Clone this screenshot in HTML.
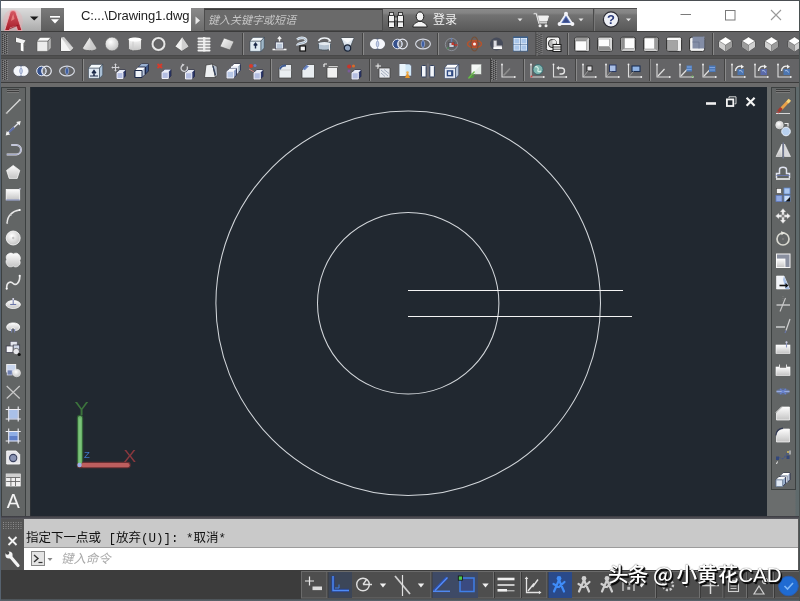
<!DOCTYPE html>
<html lang="zh-CN"><head><meta charset="utf-8"><title>Drawing1.dwg</title>
<style>
html,body{margin:0;padding:0}
body{width:800px;height:601px;overflow:hidden;position:relative;background:#5a5a5a;
 font-family:"Liberation Sans","Noto Sans CJK SC",sans-serif;}
div,svg,span{position:absolute;box-sizing:border-box}
svg{left:0;top:0;overflow:visible}
#win{left:0;top:0;width:800px;height:601px;overflow:hidden;background:#5a5a5a;will-change:transform}
#topline{left:0;top:0;width:800px;height:1px;background:#4a4e52}
#topwhite{left:1px;top:1px;width:798px;height:8px;background:#fff}
#edgeL{left:0;top:0;width:1px;height:601px;background:#56626f}
#edgeR{left:799px;top:0;width:1px;height:601px;background:#4a5252}
#titlebar{left:0;top:8px;width:800px;height:24px;background:linear-gradient(#4e4e4e 0,#4e4e4e 1px,#8a8a8a 1px,#848484 5px,#727272 7px,#585858 23px)}
#appbtn{left:1px;top:0;width:40px;height:24px;background:linear-gradient(#dcdcdc,#c4c4c4 50%,#a8a8a8)}
#qat{left:41px;top:0;width:23px;height:24px;background:linear-gradient(#7a7a7a,#5c5c5c)}
#doctab{left:64px;top:0;width:127px;height:24px;background:#fff}
#doctab span{left:17px;top:-2px;font-size:13px;line-height:20px;color:#222;white-space:nowrap;letter-spacing:-0.08px}
#srchbtn{left:191px;top:0;width:13px;height:24px;background:linear-gradient(#8a8a8a,#6a6a6a)}
#search{left:204px;top:1px;width:179px;height:22px;background:#6a6a6a;border:1px solid #4c4c4c;border-top-color:#3c3c3c}
#search span{left:3px;top:1px;font-size:11px;line-height:18px;font-style:italic;color:#c6c6c6;white-space:nowrap}
#login{left:433px;top:2px;font-size:12px;line-height:20px;color:#f0f0f0;white-space:nowrap}
#winctl{left:637px;top:0;width:162px;height:24px;background:#fff}
#tb1{left:0;top:31px;width:800px;height:25px;background:#646466;border-top:1px solid #3c3c3c;border-bottom:1px solid #484848}
#tb2{left:0;top:58px;width:800px;height:25px;background:#646466;border-top:1px solid #4a4a4a;border-bottom:1px solid #3c3c3c}
#tbgap{left:0;top:56px;width:800px;height:2px;background:#505050}
#tbgap2{left:0;top:83px;width:800px;height:5px;background:#6b6b6b}
#leftbar{left:0;top:87px;width:31px;height:431px;background:#6a6d6d;border-right:1px solid #2c3034}
#rightbar{left:767px;top:87px;width:33px;height:431px;background:linear-gradient(90deg,#6a6d6d 0,#6a6d6d 28px,#5f6a6c 29px)}
#canvas{left:31px;top:87px;width:736px;height:429px;background:#212830}
#cmdgap{left:0;top:516px;width:800px;height:3px;background:linear-gradient(#3a3a40,#5c5c62)}
#cmdgrip{left:0;top:519px;width:24px;height:51px;background:#555}
#cmdhist{left:24px;top:519px;width:774px;height:29px;background:#c9c9c9}
#cmdhist span{left:2px;top:10px;font-size:12.5px;line-height:20px;color:#111;white-space:pre;font-family:"Liberation Mono","Noto Sans CJK SC",monospace}
#cmdin{left:24px;top:547px;width:774px;height:23px;background:#fff;border-top:1px solid #9c9c9c}
#cmdin span{left:37px;top:1px;font-size:12.4px;line-height:20px;color:#aaa;font-style:italic;white-space:nowrap}
#status{left:0;top:570px;width:800px;height:31px;background:#3c3c3c}
#wm{left:609px;top:558.5px;font-size:20.6px;line-height:28px;color:#fff;white-space:nowrap;
 text-shadow:1px 1px 0 #111,1.5px 1.5px 1px #000,0 0 1px #333}
#wm .at{position:static;font-family:"Noto Sans CJK SC",sans-serif;margin-left:-3px;margin-right:3.5px}
#wm{font-weight:500}
#wm .w1{position:static;letter-spacing:-0.9px;margin-left:-1px;margin-right:2.8px}
#edgeB{left:0;top:599px;width:800px;height:2px;background:linear-gradient(#4a5054,#5c666e)}
</style></head>
<body>
<div id="win">
<div id="topline"></div><div id="topwhite"></div>
<div id="titlebar">
<div id="appbtn"></div><div id="qat"></div>
<div id="doctab"><span>C:...\Drawing1.dwg</span></div>
<div id="srchbtn"></div>
<div id="search"><span>键入关键字或短语</span></div>
<span id="login">登录</span>
<div id="winctl"></div>
<svg width="800" height="24" viewBox="0 8 800 24"><defs>
<linearGradient id="gw" x1="0" y1="0" x2="1" y2="1"><stop offset="0" stop-color="#fff"/><stop offset="1" stop-color="#b8b8b8"/></linearGradient>
<linearGradient id="gv" x1="0" y1="0" x2="0" y2="1"><stop offset="0" stop-color="#fdfdfd"/><stop offset="1" stop-color="#c4c4c4"/></linearGradient>
<linearGradient id="gb" x1="0" y1="0" x2="1" y2="1"><stop offset="0" stop-color="#e8f0fa"/><stop offset="1" stop-color="#6f8fc0"/></linearGradient>
<radialGradient id="gs" cx="0.4" cy="0.35" r="0.7"><stop offset="0" stop-color="#fff"/><stop offset="1" stop-color="#c0c0c0"/></radialGradient>
<linearGradient id="ga" x1="0" y1="0" x2="0" y2="1"><stop offset="0" stop-color="#d85a64"/><stop offset="1" stop-color="#a41c28"/></linearGradient>
</defs><ellipse cx="13" cy="21" rx="10" ry="11.5" fill="#f4a8b0" opacity="0.3"/><path d="M4.6 30.6 L10.4 11.4 Q13 9.6 15.6 11.4 L22 30.6 H17.6 L16.2 26.2 L10 28 L9.2 30.6Z" fill="url(#ga)" stroke="#eeb0b6" stroke-width="0.9"/><path d="M12 17 L13.2 14 L14.6 19 L11 21Z" fill="#f08a88" opacity="0.8"/><path d="M9 29 L18.5 25" stroke="#8a1420" stroke-width="1.2" opacity="0.7"/><path d="M30 16.5 H38.5 L34.2 20.5Z" fill="#1a1a1a"/><rect x="50" y="16" width="10" height="1.6" fill="#fff"/><path d="M51 19.2 H59 L55 23.5Z" fill="#fff"/><path d="M195.5 16.5 L200 20.5 L195.5 24.5Z" fill="#e8e8e8"/><g><rect x="388.5" y="15" width="6" height="12.5" rx="1" fill="#f2f2f2" stroke="#222" stroke-width="1"/><rect x="397.5" y="15" width="6" height="12.5" rx="1" fill="#f2f2f2" stroke="#222" stroke-width="1"/><rect x="389.5" y="12.5" width="4" height="3" fill="#ddd" stroke="#222" stroke-width="0.8"/><rect x="398.5" y="12.5" width="4" height="3" fill="#ddd" stroke="#222" stroke-width="0.8"/><rect x="394.5" y="17" width="3" height="4" fill="#999" stroke="#222" stroke-width="0.6"/><rect x="389" y="21" width="5" height="1.5" fill="#666"/><rect x="398" y="21" width="5" height="1.5" fill="#666"/></g><g><ellipse cx="420" cy="16.5" rx="3.8" ry="4.6" fill="#f4f4f4" stroke="#1c1c1c" stroke-width="1"/><path d="M412.8 27 C413.5 23 417 22.8 418.2 21.5 H421.8 C423 22.8 426.5 23 427.2 27Z" fill="#f4f4f4" stroke="#1c1c1c" stroke-width="0.9"/></g><path d="M517.5 18.5 H522.5 L520 21.2Z" fill="#e4e4e4"/><g fill="none" stroke="#f0f0f0" stroke-width="1.6"><path d="M533.5 13.5 H536.5 L539 23 H547"/><path d="M537.5 16 H548.5 L547 21 H538.8Z" fill="#f0f0f0" stroke-width="1"/></g><circle cx="540" cy="25.8" r="1.5" fill="#f0f0f0"/><circle cx="546" cy="25.8" r="1.5" fill="#f0f0f0"/><path d="M533 13 H537 L539.5 23.5 H547.5" fill="none" stroke="#222" stroke-width="0.5" opacity="0.6"/><path d="M566 14 L572.5 24 H559.5Z" fill="#5a74b8" stroke="#eef0f8" stroke-width="1.8" stroke-linejoin="round"/><circle cx="566" cy="13.8" r="2" fill="#f4f4f8"/><circle cx="559.6" cy="24" r="2" fill="#f4f4f8"/><circle cx="572.4" cy="24" r="2" fill="#f4f4f8"/><path d="M566 17.5 L569.3 22.5 H562.7Z" fill="#3a4a88"/><path d="M578.5 18.5 H583.5 L581 21.2Z" fill="#e4e4e4"/><rect x="593" y="9" width="1" height="22" fill="#4a4a4a"/><rect x="594" y="9" width="1" height="22" fill="#787878"/><circle cx="611" cy="19.5" r="7.6" fill="#eef0f6" stroke="#2c2c34" stroke-width="1.2"/><text x="611" y="24.3" text-anchor="middle" font-family="Liberation Sans,sans-serif" font-weight="bold" font-size="13" fill="#2a3a7a">?</text><path d="M626 18.5 H631 L628.5 21.2Z" fill="#e4e4e4"/><rect x="680.5" y="14" width="10.5" height="1" fill="#7a7a7a"/><rect x="725.5" y="10.5" width="9.5" height="9.5" fill="none" stroke="#7a7a7a" stroke-width="1"/><path d="M771 10 L781 20 M781 10 L771 20" stroke="#999" stroke-width="1.1" fill="none"/></svg>
</div>
<div id="tb1"></div><div id="tbgap"></div><div id="tb2"></div><div id="tbgap2"></div>
<svg width="800" height="60" viewBox="0 0 800 60" style="top:30px"><path d="M2.5 4 V24" stroke="#3a3a3a" stroke-width="1" stroke-dasharray="1 1"/><path d="M3.5 5 V24" stroke="#858585" stroke-width="1" stroke-dasharray="1 1"/><path d="M4.5 5 V24" stroke="#3a3a3a" stroke-width="1" stroke-dasharray="1 1"/><path d="M5.5 4 V24" stroke="#858585" stroke-width="1" stroke-dasharray="1 1"/><path d="M6.5 4 V24" stroke="#3a3a3a" stroke-width="1" stroke-dasharray="1 1"/><path d="M7.5 5 V24" stroke="#858585" stroke-width="1" stroke-dasharray="1 1"/><path d="M2.5 30 V50" stroke="#3a3a3a" stroke-width="1" stroke-dasharray="1 1"/><path d="M3.5 31 V50" stroke="#858585" stroke-width="1" stroke-dasharray="1 1"/><path d="M4.5 31 V50" stroke="#3a3a3a" stroke-width="1" stroke-dasharray="1 1"/><path d="M5.5 30 V50" stroke="#858585" stroke-width="1" stroke-dasharray="1 1"/><path d="M6.5 30 V50" stroke="#3a3a3a" stroke-width="1" stroke-dasharray="1 1"/><path d="M7.5 31 V50" stroke="#858585" stroke-width="1" stroke-dasharray="1 1"/><rect x="242" y="3" width="1" height="22" fill="#444"/><rect x="243" y="3" width="1" height="22" fill="#8a8a8a"/><rect x="362" y="3" width="1" height="22" fill="#444"/><rect x="363" y="3" width="1" height="22" fill="#8a8a8a"/><rect x="437" y="3" width="1" height="22" fill="#444"/><rect x="438" y="3" width="1" height="22" fill="#8a8a8a"/><rect x="567" y="3" width="1" height="22" fill="#444"/><rect x="568" y="3" width="1" height="22" fill="#8a8a8a"/><rect x="712" y="3" width="1" height="22" fill="#444"/><rect x="713" y="3" width="1" height="22" fill="#8a8a8a"/><rect x="82" y="29" width="1" height="22" fill="#444"/><rect x="83" y="29" width="1" height="22" fill="#8a8a8a"/><rect x="270" y="29" width="1" height="22" fill="#444"/><rect x="271" y="29" width="1" height="22" fill="#8a8a8a"/><rect x="369" y="29" width="1" height="22" fill="#444"/><rect x="370" y="29" width="1" height="22" fill="#8a8a8a"/><rect x="523" y="29" width="1" height="22" fill="#444"/><rect x="524" y="29" width="1" height="22" fill="#8a8a8a"/><rect x="575" y="29" width="1" height="22" fill="#444"/><rect x="576" y="29" width="1" height="22" fill="#8a8a8a"/><rect x="649" y="29" width="1" height="22" fill="#444"/><rect x="650" y="29" width="1" height="22" fill="#8a8a8a"/><rect x="724" y="29" width="1" height="22" fill="#444"/><rect x="725" y="29" width="1" height="22" fill="#8a8a8a"/><rect x="535.5" y="2" width="1" height="24" fill="#3e3e3e"/><rect x="536.5" y="2" width="1" height="24" fill="#747474"/><path d="M537.0 4 V24" stroke="#3a3a3a" stroke-width="1" stroke-dasharray="1 1"/><path d="M538.0 5 V24" stroke="#858585" stroke-width="1" stroke-dasharray="1 1"/><path d="M539.0 5 V24" stroke="#3a3a3a" stroke-width="1" stroke-dasharray="1 1"/><path d="M540.0 4 V24" stroke="#858585" stroke-width="1" stroke-dasharray="1 1"/><path d="M541.0 4 V24" stroke="#3a3a3a" stroke-width="1" stroke-dasharray="1 1"/><path d="M542.0 5 V24" stroke="#858585" stroke-width="1" stroke-dasharray="1 1"/><rect x="490" y="28" width="1" height="24" fill="#3e3e3e"/><rect x="491" y="28" width="1" height="24" fill="#747474"/><path d="M491.5 30 V50" stroke="#3a3a3a" stroke-width="1" stroke-dasharray="1 1"/><path d="M492.5 31 V50" stroke="#858585" stroke-width="1" stroke-dasharray="1 1"/><path d="M493.5 31 V50" stroke="#3a3a3a" stroke-width="1" stroke-dasharray="1 1"/><path d="M494.5 30 V50" stroke="#858585" stroke-width="1" stroke-dasharray="1 1"/><path d="M495.5 30 V50" stroke="#3a3a3a" stroke-width="1" stroke-dasharray="1 1"/><path d="M496.5 31 V50" stroke="#858585" stroke-width="1" stroke-dasharray="1 1"/><g transform="translate(13.0 6.0)"><path d="M3 1.5 L12.5 4.5 V10.5 L10.5 10 V15.5 L7.5 14.5 V7 L3 6Z" fill="#dedede" stroke="#3a3a3a" stroke-width="0.6"/><path d="M7.8 7 L10.5 7.6 V15.5 L7.8 14.5Z" fill="#fff"/><path d="M3 1.5 L12.5 4.5 L10.5 7.6 L3 6Z" fill="#f4f4f4"/><path d="M10.5 7.6 L12.5 4.5 V10.5 L10.5 10Z" fill="#6a6a6a"/></g><g transform="translate(36.0 6.0)"><path d="M1 5 H12 V15.4 H1Z" fill="#ececec" stroke="#4a4a4a" stroke-width="0.5"/><path d="M1 5 L4 1.4 H15.2 L12 5Z" fill="#fbfbfb" stroke="#4a4a4a" stroke-width="0.5"/><path d="M12 5 L15.2 1.4 V12 L12 15.4Z" fill="#b4b4b4" stroke="#4a4a4a" stroke-width="0.5"/></g><g transform="translate(59.0 6.0)"><path d="M2 1.5 L14.5 12 L11.5 15 H2Z" fill="url(#gw)" stroke="#3a3a3a" stroke-width="0.7"/><path d="M2 1.5 L5 1 L14.5 12 L11.5 15Z" fill="#d6d6d6" opacity="0.9"/><path d="M2 1.5 V15 H11.5 L2 1.5Z" fill="#f4f4f4"/></g><g transform="translate(81.5 6.0)"><path d="M8 1 L15 12 C15 15.5 1 15.5 1 12Z" fill="url(#gw)" stroke="#444" stroke-width="0.6"/><path d="M8 1 L9.5 14.5 C12 14.3 15 13.5 15 12Z" fill="#c9c9c9" opacity="0.7"/></g><g transform="translate(104.0 6.0)"><circle cx="8" cy="8" r="6.9" fill="url(#gs)" stroke="#555" stroke-width="0.6"/></g><g transform="translate(127.0 6.0)"><path d="M1.5 3.5 C1.5 0.8 14.5 0.8 14.5 3.5 V12.5 C14.5 15.4 1.5 15.4 1.5 12.5Z" fill="url(#gv)" stroke="#444" stroke-width="0.6"/><path d="M6 1.7 V14.5" stroke="#ccc" stroke-width="1"/><ellipse cx="8" cy="3.5" rx="6.5" ry="2" fill="#fff"/></g><g transform="translate(150.5 6.0)"><circle cx="8" cy="8" r="6" fill="none" stroke="#e6e6e6" stroke-width="2.6"/><circle cx="8" cy="8" r="7.4" fill="none" stroke="#444" stroke-width="0.5"/><circle cx="8" cy="8" r="4.6" fill="none" stroke="#444" stroke-width="0.5"/></g><g transform="translate(173.5 6.0)"><path d="M8.5 1 L15 10.5 L8 15 L1.5 10.5Z" fill="#f0f0f0" stroke="#444" stroke-width="0.6"/><path d="M8.5 1 L15 10.5 L8 15Z" fill="#cfcfcf"/></g><g transform="translate(196.0 6.0)"><rect x="7" y="1" width="2.4" height="14.5" fill="#dcdcdc"/><rect x="1.5" y="1.6" width="13" height="1.8" rx="0.9" fill="#f2f2f2"/><rect x="1.5" y="4.6" width="13" height="1.8" rx="0.9" fill="#f2f2f2"/><rect x="1.5" y="7.6" width="13" height="1.8" rx="0.9" fill="#f2f2f2"/><rect x="1.5" y="10.6" width="13" height="1.8" rx="0.9" fill="#f2f2f2"/><rect x="1.5" y="13.6" width="13" height="1.8" rx="0.9" fill="#f2f2f2"/></g><g transform="translate(219.0 6.0)"><path d="M5 2 L15 5.5 L11 14 L1 10.5Z" fill="url(#gw)" stroke="#555" stroke-width="0.6"/></g><g transform="translate(249.0 6.0)"><path d="M1 5 H12 V15.4 H1Z" fill="#dfeaf2" stroke="#2b3a4a" stroke-width="0.5"/><path d="M1 5 L4 1.4 H15.2 L12 5Z" fill="#f4f8fb" stroke="#2b3a4a" stroke-width="0.5"/><path d="M12 5 L15.2 1.4 V12 L12 15.4Z" fill="#9fb6c8" stroke="#2b3a4a" stroke-width="0.5"/><path d="M6.5 12.5 V8 M4.8 9.5 L6.5 7.2 L8.2 9.5" stroke="#1c2a4a" stroke-width="1.4" fill="none"/></g><g transform="translate(271.5 6.0)"><path d="M1 13.5 H15" stroke="#f4f4f4" stroke-width="1.6"/><rect x="4" y="6" width="8" height="7" fill="#dfe6ee" stroke="#445" stroke-width="0.7"/><path d="M8 5.5 V1.5 M6.3 3 L8 1 L9.7 3" stroke="#f0f0f0" stroke-width="1.3" fill="none"/><rect x="5.5" y="8" width="5" height="4" fill="#b9c6d8"/></g><g transform="translate(294.0 6.0)"><path d="M3 3.5 C7 0.5 13 2 12 5 C11 8 3 6.5 3.5 9.5" fill="none" stroke="#e8eef4" stroke-width="2.6"/><path d="M3 3.5 C7 0.5 13 2 12 5 C11 8 3 6.5 3.5 9.5" fill="none" stroke="#8aa0b8" stroke-width="0.8"/><rect x="6" y="10" width="5.5" height="5" fill="#f4f4f4" stroke="#111" stroke-width="1.2"/></g><g transform="translate(316.5 6.0)"><path d="M2 5 C4 1 12 1 14 5" fill="none" stroke="#eef2f6" stroke-width="1.6"/><path d="M12.5 3.2 L14.6 5.6 L11.6 5.8Z" fill="#eef2f6"/><path d="M2 7.5 C2 5.8 14 5.8 14 7.5 V12.5 C14 14.6 2 14.6 2 12.5Z" fill="#b4c2d0" stroke="#3a4650" stroke-width="0.7"/><ellipse cx="8" cy="7.6" rx="6" ry="1.7" fill="#e4eaf0"/><path d="M13 8 V14.5" stroke="#e8e8e8" stroke-width="1"/></g><g transform="translate(339.5 6.0)"><path d="M1.5 2 H14.5 L10.5 12 H5.5Z" fill="#dfe6ee" stroke="#3a4650" stroke-width="0.7"/><path d="M1.5 2 H14.5 L8 7Z" fill="#f7f9fb"/><circle cx="8" cy="12" r="3.2" fill="#8fa3bf" stroke="#1a2436" stroke-width="1.2"/></g><g transform="translate(369.5 6.0)"><ellipse cx="8" cy="8" rx="7.6" ry="5.6" fill="#3b5590" opacity="0.55"/><circle cx="5.5" cy="8" r="4.6" fill="#f4f6fb" stroke="#fff" stroke-width="0.8"/><circle cx="10.5" cy="8" r="4.6" fill="#f4f6fb" stroke="#fff" stroke-width="0.8"/><path d="M8 4.5 C6.2 6.5 6.2 9.5 8 11.5 C9.8 9.5 9.8 6.5 8 4.5Z" fill="#c9d3ea" stroke="#6a7db0" stroke-width="0.6"/></g><g transform="translate(392.0 6.0)"><circle cx="5.5" cy="8" r="4.8" fill="#35508c" stroke="#e6e9f2" stroke-width="1"/><circle cx="10.5" cy="8" r="4.8" fill="none" stroke="#e6e9f2" stroke-width="1.2"/><path d="M8 4 C6 6.3 6 9.7 8 12 C10 9.7 10 6.3 8 4Z" fill="#6a6a6a" stroke="#e6e9f2" stroke-width="0.7"/></g><g transform="translate(415.0 6.0)"><ellipse cx="8" cy="8" rx="7.4" ry="4.9" fill="none" stroke="#d8dce6" stroke-width="1.1"/><path d="M8 4 C5.8 6.3 5.8 9.7 8 12 C10.2 9.7 10.2 6.3 8 4Z" fill="#3e5fa4" stroke="#9fb0d8" stroke-width="0.7"/></g><g transform="translate(443.5 6.0)"><circle cx="8" cy="8.5" r="6.2" fill="none" stroke="#8a8f98" stroke-width="1"/><path d="M8 9 V2" stroke="#6a7fb0" stroke-width="1.4"/><path d="M8 9 H14" stroke="#c0392b" stroke-width="1.6"/><path d="M8 9 L3.5 13" stroke="#4f8a5a" stroke-width="1.4"/><rect x="5.5" y="6.5" width="5" height="5" fill="#c9cdd6" stroke="#334" stroke-width="0.6"/><rect x="8" y="6.5" width="2.5" height="2.5" fill="#c0392b"/></g><g transform="translate(466.5 6.0)"><ellipse cx="8" cy="8" rx="7" ry="3.6" fill="none" stroke="#b5532c" stroke-width="1.5"/><ellipse cx="8" cy="8" rx="3.6" ry="7" fill="none" stroke="#7a4a2a" stroke-width="1.1" opacity="0.8"/><circle cx="8" cy="8" r="3" fill="#c0452b"/><circle cx="8" cy="8" r="1.5" fill="#fbeee6"/></g><g transform="translate(489.0 6.0)"><circle cx="7.5" cy="8" r="6.5" fill="#2a3350" opacity="0.5"/><path d="M4.5 4.5 H7.8 V9.5 H13 V13 H4.5Z" fill="#dcdce4" stroke="#777" stroke-width="0.4"/><path d="M4.5 11.2 H13 V13 H4.5Z" fill="#fff"/></g><g transform="translate(512.5 6.0)"><rect x="0.5" y="0.5" width="15" height="15" fill="#2f5f9a" opacity="0.75"/><rect x="1.5" y="2.5" width="5.6" height="5.2" fill="#a9c6ea" stroke="#e8f2ff" stroke-width="0.8"/><rect x="8.5" y="2.5" width="5.6" height="5.2" fill="#a9c6ea" stroke="#e8f2ff" stroke-width="0.8"/><rect x="1.5" y="9" width="5.6" height="5.2" fill="#a9c6ea" stroke="#e8f2ff" stroke-width="0.8"/><rect x="8.5" y="9" width="5.6" height="5.2" fill="#a9c6ea" stroke="#e8f2ff" stroke-width="0.8"/></g><g transform="translate(545.5 6.0)"><rect x="0.8" y="1" width="13.5" height="13.5" rx="2" fill="#f2f2f2" stroke="#2a2a2a" stroke-width="1"/><circle cx="7" cy="7.5" r="4" fill="#b8b8b8" stroke="#333" stroke-width="1.1"/><path d="M7 3.5 A4 4 0 0 1 11 7.5 H7Z" fill="#e8e8e8"/><rect x="7.5" y="8.5" width="8" height="7" fill="#fafafa" stroke="#1a1a1a" stroke-width="1"/><path d="M7.5 11 H15.5 M7.5 13.2 H15.5" stroke="#1a1a1a" stroke-width="0.8"/></g><g transform="translate(574.0 6.0)"><rect x="0.6" y="1.2" width="15" height="14.2" rx="2.2" fill="#e4e4e4" stroke="#2e2e2e" stroke-width="1"/><path d="M1.2 1.8 H15 L12.5 5 H1.5 Z" fill="#9a9a9a"/><path d="M15 1.8 V14.8 L12.5 14.5 V5 Z" fill="#cfcfcf"/><rect x="1.5" y="5" width="11.0" height="9.5" fill="#fdfdfd" stroke="#777" stroke-width="0.5"/></g><g transform="translate(597.0 6.0)"><rect x="0.6" y="1.2" width="15" height="14.2" rx="2.2" fill="#e4e4e4" stroke="#2e2e2e" stroke-width="1"/><path d="M1.2 1.8 H15 L12.5 3 H1.5 Z" fill="#f4f4f4"/><path d="M1.2 14.8 H15 L12.5 10.5 H1.5 Z" fill="#8e8e8e"/><path d="M15 1.8 V14.8 L12.5 10.5 V3 Z" fill="#d8d8d8"/><rect x="1.5" y="3" width="11.0" height="7.5" fill="#fdfdfd" stroke="#777" stroke-width="0.5"/></g><g transform="translate(620.0 6.0)"><rect x="0.6" y="1.2" width="15" height="14.2" rx="2.2" fill="#e4e4e4" stroke="#2e2e2e" stroke-width="1"/><path d="M1.2 14.8 H15 L14.5 12.5 H4.5 Z" fill="#c8c8c8"/><path d="M1.2 1.8 V14.8 L4.5 12.5 V2 Z" fill="#8e8e8e"/><rect x="4.5" y="2" width="10.0" height="10.5" fill="#fdfdfd" stroke="#777" stroke-width="0.5"/></g><g transform="translate(643.0 6.0)"><rect x="0.6" y="1.2" width="15" height="14.2" rx="2.2" fill="#e4e4e4" stroke="#2e2e2e" stroke-width="1"/><path d="M1.2 14.8 H15 L11.5 13 H1.5 Z" fill="#cfcfcf"/><path d="M15 1.8 V14.8 L11.5 13 V2 Z" fill="#9a9a9a"/><rect x="1.5" y="2" width="10.0" height="11" fill="#fdfdfd" stroke="#777" stroke-width="0.5"/></g><g transform="translate(666.0 6.0)"><rect x="0.6" y="1.2" width="15" height="14.2" rx="2.2" fill="#e4e4e4" stroke="#2e2e2e" stroke-width="1"/><path d="M1.2 1.8 H15 L11.5 4.5 H1.5 Z" fill="#fafafa"/><path d="M15 1.8 V14.8 L11.5 14.5 V4.5 Z" fill="#f0f0f0"/><rect x="1.5" y="4.5" width="10.0" height="10.0" fill="#a4a4a4" stroke="#777" stroke-width="0.5"/></g><g transform="translate(689.0 6.0)"><rect x="0.6" y="1.2" width="15" height="14.2" rx="2" fill="#f2f2f2" stroke="#2e2e2e" stroke-width="1"/><rect x="3.5" y="0.5" width="12" height="12" fill="#838da6"/><path d="M3.5 6 H10 V12.5" fill="none" stroke="#6a7490" stroke-width="0.8"/></g><g transform="translate(717.5 6.0)"><path d="M8 1 L14.5 5 V11 L8 15.5 L1.5 11 V5Z" fill="#f4f4f4" stroke="#3a3a3a" stroke-width="0.7"/><path d="M8 1 L14.5 5 L8 9 L1.5 5Z" fill="#fff"/><path d="M1.5 5 L8 9 V15.5 L1.5 11Z" fill="#cfcfcf"/><path d="M8 9 L14.5 5 V11 L8 15.5Z" fill="#9c9c9c"/><path d="M8 1 L14.5 5 L8 9 L1.5 5Z M8 9 V15.5" fill="none" stroke="#555" stroke-width="0.5"/></g><g transform="translate(740.5 6.0)"><path d="M8 1 L14.5 5 V11 L8 15.5 L1.5 11 V5Z" fill="#f4f4f4" stroke="#3a3a3a" stroke-width="0.7"/><path d="M8 1 L14.5 5 L8 9 L1.5 5Z" fill="#fff"/><path d="M1.5 5 L8 9 V15.5 L1.5 11Z" fill="#9c9c9c"/><path d="M8 9 L14.5 5 V11 L8 15.5Z" fill="#cfcfcf"/><path d="M8 1 L14.5 5 L8 9 L1.5 5Z M8 9 V15.5" fill="none" stroke="#555" stroke-width="0.5"/></g><g transform="translate(763.5 6.0)"><path d="M8 1 L14.5 5 V11 L8 15.5 L1.5 11 V5Z" fill="#f4f4f4" stroke="#3a3a3a" stroke-width="0.7"/><path d="M8 1 L14.5 5 L8 9 L1.5 5Z" fill="#fff"/><path d="M1.5 5 L8 9 V15.5 L1.5 11Z" fill="#cfcfcf"/><path d="M8 9 L14.5 5 V11 L8 15.5Z" fill="#9c9c9c"/><path d="M8 1 L14.5 5 L8 9 L1.5 5Z M8 9 V15.5" fill="none" stroke="#555" stroke-width="0.5"/></g><g transform="translate(786.5 6.0)"><path d="M8 1 L14.5 5 V11 L8 15.5 L1.5 11 V5Z" fill="#f4f4f4" stroke="#3a3a3a" stroke-width="0.7"/><path d="M8 1 L14.5 5 L8 9 L1.5 5Z" fill="#fff"/><path d="M1.5 5 L8 9 V15.5 L1.5 11Z" fill="#9c9c9c"/><path d="M8 9 L14.5 5 V11 L8 15.5Z" fill="#cfcfcf"/><path d="M8 1 L14.5 5 L8 9 L1.5 5Z M8 9 V15.5" fill="none" stroke="#555" stroke-width="0.5"/></g><g transform="translate(13.0 33.0)"><ellipse cx="8" cy="8" rx="7.6" ry="5.6" fill="#3b5590" opacity="0.55"/><circle cx="5.5" cy="8" r="4.6" fill="#f4f6fb" stroke="#fff" stroke-width="0.8"/><circle cx="10.5" cy="8" r="4.6" fill="#f4f6fb" stroke="#fff" stroke-width="0.8"/><path d="M8 4.5 C6.2 6.5 6.2 9.5 8 11.5 C9.8 9.5 9.8 6.5 8 4.5Z" fill="#c9d3ea" stroke="#6a7db0" stroke-width="0.6"/></g><g transform="translate(36.0 33.0)"><circle cx="5.5" cy="8" r="4.8" fill="#35508c" stroke="#e6e9f2" stroke-width="1"/><circle cx="10.5" cy="8" r="4.8" fill="none" stroke="#e6e9f2" stroke-width="1.2"/><path d="M8 4 C6 6.3 6 9.7 8 12 C10 9.7 10 6.3 8 4Z" fill="#6a6a6a" stroke="#e6e9f2" stroke-width="0.7"/></g><g transform="translate(59.0 33.0)"><ellipse cx="8" cy="8" rx="7.4" ry="4.9" fill="none" stroke="#d8dce6" stroke-width="1.1"/><path d="M8 4 C5.8 6.3 5.8 9.7 8 12 C10.2 9.7 10.2 6.3 8 4Z" fill="#3e5fa4" stroke="#9fb0d8" stroke-width="0.7"/></g><g transform="translate(87.5 33.0)"><path d="M1 5 H12 V15.4 H1Z" fill="#dfe8f2" stroke="#2b3a4a" stroke-width="0.5"/><path d="M1 5 L4 1.4 H15.2 L12 5Z" fill="#f6fafd" stroke="#2b3a4a" stroke-width="0.5"/><path d="M12 5 L15.2 1.4 V12 L12 15.4Z" fill="#a9bfd6" stroke="#2b3a4a" stroke-width="0.5"/><path d="M6.5 13 V8.5 M4.6 10.2 L6.5 7.6 L8.4 10.2" stroke="#1c2a4a" stroke-width="1.5" fill="none"/><path d="M2.5 13 H10.5" stroke="#1c2a4a" stroke-width="1"/></g><g transform="translate(110.5 33.0)"><path d="M5 1 V8 M1.5 4.5 H8.5" stroke="#d4d4d8" stroke-width="1.1"/><path d="M5 0.3 L6.3 2 H3.7Z M5 8.7 L6.3 7 H3.7Z M0.8 4.5 L2.5 3.2 V5.8Z M9.2 4.5 L7.5 3.2 V5.8Z" fill="#d4d4d8"/><path d="M6.5 9.55 L9.05 7 H15.0 V12.95 L12.45 15.5 H6.5Z" fill="#2e3a6e" stroke="#1e2444" stroke-width="0.8"/><path d="M6.5 9.55 L9.05 7 H15.0 L12.45 9.55Z" fill="#e8ecf8"/><path d="M6.5 9.55 H12.45 V15.5 H6.5Z" fill="#b4bee2" stroke="#f2f2f8" stroke-width="1"/></g><g transform="translate(133.5 33.0)"><path d="M5 4.0 L8.0 1 H15 V8.0 L12.0 11 H5Z" fill="#3f5888" stroke="#1e2444" stroke-width="0.8"/><path d="M5 4.0 L8.0 1 H15 L12.0 4.0Z" fill="#9ab0d0"/><path d="M5 4.0 H12.0 V11 H5Z" fill="#5f7aa8" stroke="#1c2a4a" stroke-width="1"/><path d="M1.5 7.5 L4.5 4.5 H11.5 V11.5 L8.5 14.5 H1.5Z" fill="#b8c6dc" stroke="#1e2444" stroke-width="0.8"/><path d="M1.5 7.5 L4.5 4.5 H11.5 L8.5 7.5Z" fill="#fff"/><path d="M1.5 7.5 H8.5 V14.5 H1.5Z" fill="#eef2f8" stroke="#1c2a4a" stroke-width="1"/></g><g transform="translate(156.5 33.0)"><path d="M1 1 L5.5 5 M5.5 1 L1 5" stroke="#d83a2a" stroke-width="1.8"/><path d="M5.5 9.2 L8.2 6.5 H14.5 V12.8 L11.8 15.5 H5.5Z" fill="#2e3a6e" stroke="#1e2444" stroke-width="0.8"/><path d="M5.5 9.2 L8.2 6.5 H14.5 L11.8 9.2Z" fill="#e8ecf8"/><path d="M5.5 9.2 H11.8 V15.5 H5.5Z" fill="#b4bee2" stroke="#f2f2f8" stroke-width="1"/></g><g transform="translate(179.5 33.0)"><path d="M7.5 3.5 A3.2 3.2 0 1 1 3.5 2.2" fill="none" stroke="#d0d0d4" stroke-width="1.3"/><path d="M2.2 0.6 L5.2 1.6 L3 3.8Z" fill="#d0d0d4"/><path d="M6 9.7 L8.7 7 H15 V13.3 L12.3 16 H6Z" fill="#2e3a6e" stroke="#1e2444" stroke-width="0.8"/><path d="M6 9.7 L8.7 7 H15 L12.3 9.7Z" fill="#e8ecf8"/><path d="M6 9.7 H12.3 V16 H6Z" fill="#b4bee2" stroke="#f2f2f8" stroke-width="1"/></g><g transform="translate(202.5 33.0)"><path d="M3.5 2 L10 1 L13 14.5 H2Z" fill="#eef0f2" stroke="#3a3a3a" stroke-width="0.7"/><path d="M10 1 L14.5 3.5 L15 12 L13 14.5Z" fill="#b4bcc8" stroke="#3a3a3a" stroke-width="0.6"/><path d="M10.5 3 L13 12" stroke="#33415e" stroke-width="1.2"/></g><g transform="translate(225.5 33.0)"><path d="M6 3.6999999999999997 L8.7 1 H15 V7.300000000000001 L12.3 10 H6Z" fill="#9ab" stroke="#1e2444" stroke-width="0.8"/><path d="M6 3.6999999999999997 L8.7 1 H15 L12.3 3.6999999999999997Z" fill="#fff"/><path d="M6 3.6999999999999997 H12.3 V10 H6Z" fill="#dfe6f2" stroke="#f2f2f8" stroke-width="1"/><path d="M1.5 8.35 L4.35 5.5 H11.0 V12.15 L8.15 15.0 H1.5Z" fill="#8496c0" stroke="#1e2444" stroke-width="0.8"/><path d="M1.5 8.35 L4.35 5.5 H11.0 L8.15 8.35Z" fill="#f6f8fc"/><path d="M1.5 8.35 H8.15 V15.0 H1.5Z" fill="#b8c8e6" stroke="#f2f2f8" stroke-width="1"/></g><g transform="translate(248.0 33.0)"><circle cx="3" cy="3" r="2" fill="#d83a2a"/><circle cx="7" cy="2.5" r="1.5" fill="#6a7fc0"/><path d="M1 6 L6 9" stroke="#c88" stroke-width="1"/><path d="M6 9.7 L8.7 7 H15 V13.3 L12.3 16 H6Z" fill="#2e3a6e" stroke="#1e2444" stroke-width="0.8"/><path d="M6 9.7 L8.7 7 H15 L12.3 9.7Z" fill="#e8ecf8"/><path d="M6 9.7 H12.3 V16 H6Z" fill="#b4bee2" stroke="#f2f2f8" stroke-width="1"/></g><g transform="translate(277.0 33.0)"><path d="M2 6 C2 3 5 1.5 8 1.5 H14.5 V15 H2Z" fill="#e9edf1" stroke="#3a3a3a" stroke-width="0.7"/><path d="M3 6.5 C3.5 3.5 6 2.5 9 2.5" stroke="#3e5a92" stroke-width="1.8" fill="none"/><path d="M2 7 H14.5" stroke="#bbb" stroke-width="0.6"/></g><g transform="translate(300.0 33.0)"><path d="M2 7 L7 1.5 H14.5 V15 H2Z" fill="#e9edf1" stroke="#3a3a3a" stroke-width="0.7"/><path d="M3.5 6.5 L7.5 2.5" stroke="#5f7ab8" stroke-width="2.2" fill="none"/><path d="M5 7 L9 3" stroke="#9ab0e0" stroke-width="1"/></g><g transform="translate(323.0 33.0)"><path d="M1 1 H4 M1 1 V4" stroke="#eee" stroke-width="1.2"/><path d="M4 4.5 H14.5 V15 H4Z" fill="#f1f1f1" stroke="#3a3a3a" stroke-width="0.7"/><path d="M4 4.5 L6 3 H15.5 L14.5 4.5Z" fill="#fff" stroke="#444" stroke-width="0.5"/></g><g transform="translate(346.0 33.0)"><circle cx="3.2" cy="3.5" r="2.1" fill="#c8342a"/><circle cx="7.5" cy="3" r="1.6" fill="#d86a2a"/><circle cx="3" cy="8" r="1.5" fill="#7a5a9a"/><path d="M6 9.7 L8.7 7 H15 V13.3 L12.3 16 H6Z" fill="#2e3a6e" stroke="#1e2444" stroke-width="0.8"/><path d="M6 9.7 L8.7 7 H15 L12.3 9.7Z" fill="#e8ecf8"/><path d="M6 9.7 H12.3 V16 H6Z" fill="#b4bee2" stroke="#f2f2f8" stroke-width="1"/></g><g transform="translate(375.0 33.0)"><path d="M3 0.5 V6 M0.5 3 H6" stroke="#f4f4f4" stroke-width="1"/><path d="M4 5 H15 V15 H4Z" fill="#e6e9ee" stroke="#3a3a3a" stroke-width="0.7"/><path d="M6 7 L13 13 M6 10 L10 13.5 M9 6.5 L14 10.5" stroke="#9aa4b8" stroke-width="0.9"/></g><g transform="translate(397.5 33.0)"><path d="M2 1 H12 L14 3 V13 H2Z" fill="#cfe6f6" stroke="#556" stroke-width="0.6"/><path d="M2 1 H8 V13 H2Z" fill="#e9f4fb"/><path d="M10 9 L12.5 15 H7.5Z" fill="#e8962a"/><circle cx="10" cy="9.5" r="1.3" fill="#f0b050"/></g><g transform="translate(420.0 33.0)"><rect x="1.5" y="2.5" width="4.6" height="11.5" rx="0.8" fill="#f3f6fb" stroke="#33415e" stroke-width="1"/><rect x="9.8" y="2.5" width="4.6" height="11.5" rx="0.8" fill="#f3f6fb" stroke="#33415e" stroke-width="1"/><path d="M8 0.5 V15.5" stroke="#889" stroke-width="0.8"/></g><g transform="translate(443.5 33.0)"><path d="M1 5 H12 V15.4 H1Z" fill="#e9eef6" stroke="#24365e" stroke-width="0.5"/><path d="M1 5 L4 1.4 H15.2 L12 5Z" fill="#fff" stroke="#24365e" stroke-width="0.5"/><path d="M12 5 L15.2 1.4 V12 L12 15.4Z" fill="#b4c2d6" stroke="#24365e" stroke-width="0.5"/><rect x="3.2" y="7.2" width="6.6" height="6.2" fill="#2f4a82"/><rect x="4.6" y="8.6" width="3" height="3.4" fill="#dfe6f2"/></g><g transform="translate(466.5 33.0)"><path d="M5 1.5 H15 V11.5 H5Z" fill="#e4ebe6" stroke="#666" stroke-width="0.6"/><path d="M5 1.5 H15 L5 11.5Z" fill="#f4f7f5"/><path d="M1 15 L6 9.5 L4 14 L9 10.5 L6.5 15Z" fill="#4c9a3c"/><path d="M2 15.5 L8 8.5" stroke="#6cba4c" stroke-width="1.2"/></g><g transform="translate(500.0 33.0)"><path d="M2 1.5 V14 H15" fill="none" stroke="#dcdcdc" stroke-width="1.1"/><circle cx="2" cy="1.5" r="0.9" fill="#eee"/><circle cx="14.8" cy="14" r="0.9" fill="#eee"/><path d="M3.5 12.5 L10 5.5" stroke="#8c8c8c" stroke-width="1.6"/></g><g transform="translate(529.0 33.0)"><path d="M2 1.5 V14 H15" fill="none" stroke="#dcdcdc" stroke-width="1.1"/><circle cx="2" cy="1.5" r="0.9" fill="#eee"/><circle cx="14.8" cy="14" r="0.9" fill="#eee"/><circle cx="9" cy="6.5" r="5" fill="#7fb6b0" stroke="#2f5f6a" stroke-width="0.8"/><path d="M6 4 C8 3 10 5 9 7 C8 9 11 9 12 8" fill="none" stroke="#d6f0e6" stroke-width="1.2"/><circle cx="2.5" cy="13.5" r="1" fill="#c44"/></g><g transform="translate(551.5 33.0)"><path d="M2 1.5 V14 H15" fill="none" stroke="#dcdcdc" stroke-width="1.1"/><circle cx="2" cy="1.5" r="0.9" fill="#eee"/><circle cx="14.8" cy="14" r="0.9" fill="#eee"/><path d="M6.5 5 H10 A3 3 0 0 1 10 11 H8" fill="none" stroke="#e6e6e6" stroke-width="1.4"/><path d="M4.8 5 L7.5 3 V7Z" fill="#e6e6e6"/></g><g transform="translate(581.0 33.0)"><path d="M2 1.5 V14 H15" fill="none" stroke="#dcdcdc" stroke-width="1.1"/><circle cx="2" cy="1.5" r="0.9" fill="#eee"/><circle cx="14.8" cy="14" r="0.9" fill="#eee"/><rect x="6" y="3" width="5" height="5" fill="#e6e6ea" stroke="#222" stroke-width="0.9"/><path d="M3 13 L7 8" stroke="#999" stroke-width="1"/></g><g transform="translate(604.0 33.0)"><path d="M2 1.5 V14 H15" fill="none" stroke="#dcdcdc" stroke-width="1.1"/><circle cx="2" cy="1.5" r="0.9" fill="#eee"/><circle cx="14.8" cy="14" r="0.9" fill="#eee"/><rect x="5.5" y="2" width="6.5" height="6.5" fill="#a9bfe6" stroke="#2a3a66" stroke-width="1"/><path d="M3 13 L7 8.5" stroke="#999" stroke-width="1"/></g><g transform="translate(626.5 33.0)"><path d="M2 1.5 V14 H15" fill="none" stroke="#dcdcdc" stroke-width="1.1"/><circle cx="2" cy="1.5" r="0.9" fill="#eee"/><circle cx="14.8" cy="14" r="0.9" fill="#eee"/><rect x="5.5" y="3" width="8" height="5.5" fill="#8fb2e2" stroke="#1c3054" stroke-width="1.1"/><path d="M3 13 L7 8.5" stroke="#999" stroke-width="1"/></g><g transform="translate(655.0 33.0)"><path d="M2 1.5 V14 H15" fill="none" stroke="#dcdcdc" stroke-width="1.1"/><circle cx="2" cy="1.5" r="0.9" fill="#eee"/><circle cx="14.8" cy="14" r="0.9" fill="#eee"/><path d="M3 13 L9.5 6" stroke="#e0e0e0" stroke-width="1.2"/></g><g transform="translate(678.0 33.0)"><path d="M2 1.5 V14 H15" fill="none" stroke="#dcdcdc" stroke-width="1.1"/><circle cx="2" cy="1.5" r="0.9" fill="#eee"/><circle cx="14.8" cy="14" r="0.9" fill="#eee"/><path d="M3 13 L9.5 6" stroke="#e0e0e0" stroke-width="1.2"/><rect x="8.5" y="2.5" width="5.5" height="6" fill="#4f7fc0"/><path d="M9 4 H13.5 M9 6.5 H13.5" stroke="#88a8de" stroke-width="0.9"/><circle cx="14.5" cy="13.5" r="1" fill="#7ab86a"/></g><g transform="translate(701.0 33.0)"><path d="M2 1.5 V14 H15" fill="none" stroke="#dcdcdc" stroke-width="1.1"/><circle cx="2" cy="1.5" r="0.9" fill="#eee"/><circle cx="14.8" cy="14" r="0.9" fill="#eee"/><path d="M3 13 L9.5 6" stroke="#e0e0e0" stroke-width="1.2"/><rect x="8" y="2.5" width="6.5" height="6.5" fill="#4a78b8"/><path d="M8.5 4.5 H14 M8.5 7 H14" stroke="#86a6dc" stroke-width="0.9"/></g><g transform="translate(730.0 33.0)"><path d="M2 1.5 V14 H15" fill="none" stroke="#dcdcdc" stroke-width="1.1"/><circle cx="2" cy="1.5" r="0.9" fill="#eee"/><circle cx="14.8" cy="14" r="0.9" fill="#eee"/><path d="M5.5 8 C5.5 4 9 2.5 12 3.5" fill="none" stroke="#f0f0f0" stroke-width="1.3"/><path d="M11 1.5 L14 3.8 L11 5.8Z" fill="#f0f0f0"/><rect x="7.5" y="6" width="6.5" height="6" fill="#4a78b8" opacity="0.9"/><path d="M9 8 C10 7 12 7.5 12.5 9.5" stroke="#a8c0e8" stroke-width="1" fill="none"/></g><g transform="translate(753.0 33.0)"><path d="M2 1.5 V14 H15" fill="none" stroke="#dcdcdc" stroke-width="1.1"/><circle cx="2" cy="1.5" r="0.9" fill="#eee"/><circle cx="14.8" cy="14" r="0.9" fill="#eee"/><path d="M5.5 8 C5.5 4 9 2.5 12 3.5" fill="none" stroke="#f0f0f0" stroke-width="1.3"/><path d="M11 1.5 L14 3.8 L11 5.8Z" fill="#f0f0f0"/><rect x="7.5" y="6" width="6.5" height="6" fill="#5a6ab0" opacity="0.9"/><path d="M9 8 C10 7 12 7.5 12.5 9.5" stroke="#a8c0e8" stroke-width="1" fill="none"/></g><g transform="translate(776.0 33.0)"><path d="M2 1.5 V14 H15" fill="none" stroke="#dcdcdc" stroke-width="1.1"/><circle cx="2" cy="1.5" r="0.9" fill="#eee"/><circle cx="14.8" cy="14" r="0.9" fill="#eee"/><path d="M5.5 8 C5.5 4 9 2.5 12 3.5" fill="none" stroke="#f0f0f0" stroke-width="1.3"/><path d="M11 1.5 L14 3.8 L11 5.8Z" fill="#f0f0f0"/><rect x="7.5" y="6" width="6.5" height="6" fill="#4a78b8" opacity="0.9"/><path d="M9 8 C10 7 12 7.5 12.5 9.5" stroke="#a8c0e8" stroke-width="1" fill="none"/></g></svg>
<div id="leftbar"></div><div id="rightbar"></div>
<div id="canvas"><svg width="736" height="429" viewBox="31 87 736 429"><g fill="none" stroke="#d2d6da" stroke-width="1.05"><circle cx="408.2" cy="303.3" r="192.3"/><circle cx="408.2" cy="303.3" r="90.7"/><path d="M408 290.5H623M408 316.5H632" stroke="#f4f4f4" stroke-width="1"/></g></svg></div>
<svg width="800" height="601" viewBox="0 0 800 601" style="pointer-events:none"><rect x="1.5" y="87.5" width="24" height="430" fill="#626565" stroke="#3c4040" stroke-width="1"/><rect x="771.5" y="87.5" width="24" height="402" fill="#626565" stroke="#3c4040" stroke-width="1"/><rect x="7" y="89" width="12" height="1" fill="#3d3d3d"/><rect x="7" y="90" width="12" height="1" fill="#7a7a7a"/><rect x="7" y="91" width="12" height="1" fill="#3d3d3d"/><rect x="7" y="92" width="12" height="1" fill="#7a7a7a"/><rect x="776" y="89" width="14" height="1" fill="#3d3d3d"/><rect x="776" y="90" width="14" height="1" fill="#7a7a7a"/><rect x="776" y="91" width="14" height="1" fill="#3d3d3d"/><rect x="776" y="92" width="14" height="1" fill="#7a7a7a"/><g transform="translate(5.2 98.5)"><path d="M1 15 L15 1" stroke="#dadada" stroke-width="1.2"/><circle cx="1.5" cy="14.5" r="1" fill="#aaa"/><circle cx="14.5" cy="1.5" r="1" fill="#ccc"/></g><g transform="translate(5.2 120.0)"><path d="M1.5 14 L14 2.5" stroke="#e0e0e6" stroke-width="1.5"/><path d="M15.5 1 L14.5 5.5 L11 2Z" fill="#f0f0f0"/><path d="M0.5 15.5 L1.5 11 L5 14.5Z" fill="#f0f0f0"/><path d="M4 12 L9 7.5" stroke="#5f6fa8" stroke-width="2"/></g><g transform="translate(5.2 142.0)"><path d="M6 3 H11 A4.5 4.5 0 0 1 11 12.5 H1.5" fill="none" stroke="#e4e4ec" stroke-width="2"/><path d="M6 3 H11 A4.5 4.5 0 0 1 11 12.5 H1.5" fill="none" stroke="#7a84b0" stroke-width="0.6"/></g><g transform="translate(5.2 164.0)"><path d="M8 1.4 L14.6 6.4 L12 14.4 H4 L1.4 6.4Z" fill="url(#gv)" stroke="#fff" stroke-width="0.7"/></g><g transform="translate(5.2 186.0)"><rect x="1" y="3.5" width="13.5" height="10.5" fill="url(#gv)" stroke="#fff" stroke-width="0.8"/><path d="M1 14 H14.5" stroke="#6a76a8" stroke-width="1"/><rect x="14" y="2" width="1.6" height="1.6" fill="#aab"/></g><g transform="translate(5.2 208.0)"><path d="M2 15 C2 8 7 3 14.5 2" fill="none" stroke="#e8e8e8" stroke-width="1.6"/><circle cx="14.5" cy="2" r="1.1" fill="#fff"/><circle cx="2" cy="15" r="1" fill="#ccc"/><circle cx="5.5" cy="7" r="1" fill="#ccc"/></g><g transform="translate(5.2 230.0)"><circle cx="8" cy="8" r="7" fill="url(#gs)" stroke="#fff" stroke-width="0.8"/><circle cx="8" cy="8" r="1.2" fill="#c4c4c4"/></g><g transform="translate(5.2 252.0)"><path d="M3 2 C5 0.5 7 1 8 2 C10 0.5 13 1 14 3 C15.5 5 15.5 7 14.5 8.5 C15.5 10.5 15 13 13 14 C11 15.5 9 15 8 14 C6 15.5 3 15 2 13 C0.5 11 0.5 9 1.5 7.5 C0.5 5.5 1 3 3 2Z" fill="url(#gv)" stroke="#fff" stroke-width="0.6"/></g><g transform="translate(5.2 274.0)"><path d="M1.5 15 C1 7 6 7.5 8 9.5 C10.5 12 15 9 14.5 1.5" fill="none" stroke="#e8e8e8" stroke-width="1.7"/><circle cx="1.5" cy="14.8" r="1" fill="#fff"/><circle cx="14.5" cy="1.8" r="1" fill="#fff"/></g><g transform="translate(5.2 295.5)"><ellipse cx="8" cy="9" rx="7.2" ry="4" fill="url(#gv)" stroke="#fff" stroke-width="0.8"/><path d="M8 3 V9 M5 9 H11" stroke="#6a76a8" stroke-width="1"/><circle cx="8" cy="3.5" r="1" fill="#dde"/></g><g transform="translate(5.2 318.0)"><path d="M1.5 9 C1.5 3.5 14.5 3.5 14.5 9 C14.5 12 11 12.5 10 12.5 L9 10 H6.5 L6 12.5 C4 12.5 1.5 12 1.5 9Z" fill="url(#gv)" stroke="#fff" stroke-width="0.8"/><path d="M6.5 11 V14.5 M9.5 11 V14.5" stroke="#7a86b8" stroke-width="1"/></g><g transform="translate(5.2 340.0)"><rect x="5" y="1.5" width="7" height="6" fill="#e4e6ee" stroke="#556" stroke-width="0.6"/><rect x="1" y="6" width="7" height="6.5" fill="#f4f4f8" stroke="#334" stroke-width="0.7"/><rect x="8" y="5" width="6.5" height="6.5" fill="#cfd6e6" stroke="#334" stroke-width="0.7"/><circle cx="11" cy="11.5" r="3.2" fill="#e6e6ea" stroke="#333" stroke-width="0.6"/><circle cx="14" cy="14.5" r="1.6" fill="#111"/></g><g transform="translate(5.2 362.0)"><rect x="1.5" y="2.5" width="9" height="7.5" fill="#c9d6ee" stroke="#f4f4f4" stroke-width="0.9"/><rect x="2" y="8" width="5" height="5" fill="#6f80b0" stroke="#dde" stroke-width="0.7"/><circle cx="11.5" cy="11" r="3.8" fill="url(#gs)" stroke="#eee" stroke-width="0.6"/></g><g transform="translate(5.2 384.0)"><path d="M1.5 2 L14.5 14.5 M14.5 2 L1.5 14.5" stroke="#c9c9c9" stroke-width="1.2"/></g><g transform="translate(5.2 406.0)"><rect x="3.5" y="3.5" width="9.5" height="9.5" fill="#a9c0e8" stroke="#4a5f98" stroke-width="0.8"/><path d="M3.5 0.5 V15.5 M13 0.5 V15.5 M0.5 3.5 H15.5 M0.5 13 H15.5" stroke="#eeeef4" stroke-width="1.1"/></g><g transform="translate(5.2 428.0)"><rect x="3.5" y="3.5" width="9.5" height="9.5" fill="#8faee6" stroke="#4a5f98" stroke-width="0.8"/><rect x="3.5" y="8" width="9.5" height="5" fill="#5f7fc8"/><path d="M3.5 0.5 V15.5 M13 0.5 V15.5 M0.5 3.5 H15.5 M0.5 13 H15.5" stroke="#eeeef4" stroke-width="1.1"/></g><g transform="translate(5.2 449.5)"><path d="M1.5 1.5 H11 L14.5 5 V14.5 H1.5Z" fill="#e6e6ea" stroke="#fafafa" stroke-width="0.9"/><circle cx="8" cy="8.5" r="3.6" fill="#8a94b4" stroke="#39415e" stroke-width="1.1"/></g><g transform="translate(5.2 471.5)"><rect x="1" y="2.5" width="14" height="12" fill="#f0f0f0" stroke="#fafafa" stroke-width="0.8"/><rect x="1" y="2.5" width="14" height="3" fill="#d0d0d0"/><path d="M1 6 H15 M1 10 H15 M5.7 6 V14.5 M10.3 6 V14.5" stroke="#666" stroke-width="0.9"/></g><text x="13.2" y="508.3" text-anchor="middle" font-family="Liberation Sans,sans-serif" font-size="19.5" fill="#f4f4f4">A</text><g transform="translate(775.0 99.0)"><path d="M14.5 1 L6 10" stroke="#e8a24a" stroke-width="3"/><path d="M14.8 0.8 L12.5 3.5" stroke="#f6d67a" stroke-width="3"/><path d="M6.5 9 L3.5 12.5" stroke="#a8382a" stroke-width="3.2"/><path d="M1 14.5 H15" stroke="#d8d8d8" stroke-width="1"/><path d="M1.5 13 L4 14" stroke="#c44" stroke-width="1"/></g><g transform="translate(775.0 120.5)"><circle cx="4.5" cy="4.5" r="3.8" fill="url(#gs)" stroke="#eee" stroke-width="0.6"/><circle cx="11" cy="11" r="4.3" fill="#b8d0ee" stroke="#e8f0fa" stroke-width="1"/><path d="M9.5 3 H13 V6" fill="none" stroke="#e8e8e8" stroke-width="1.2"/></g><g transform="translate(775.0 142.5)"><path d="M7 1.5 V14 H1Z" fill="url(#gv)" stroke="#fff" stroke-width="0.5"/><path d="M9.5 1.5 V14 H15.5Z" fill="#d8d8dc" stroke="#f4f4f4" stroke-width="0.6"/><path d="M8.2 0 V16" stroke="#7a84b0" stroke-width="0.9"/></g><g transform="translate(775.0 164.5)"><path d="M1.5 13.5 V9 H4.5 V5 C4.5 2 11.5 2 11.5 5 V9 H14.5 V13.5" fill="none" stroke="#dfe2ee" stroke-width="1.5"/><path d="M1 14.5 H15" stroke="#f0f0f0" stroke-width="1.6"/><path d="M1.5 11 H14.5" stroke="#6a76a8" stroke-width="1"/></g><g transform="translate(775.0 186.5)"><rect x="1.5" y="2" width="5" height="5" fill="#f0f0f0" stroke="#444" stroke-width="0.6"/><rect x="9" y="1.5" width="6" height="6" fill="#a9c6f0" stroke="#5f86c8" stroke-width="0.8"/><rect x="1" y="9" width="6" height="6" fill="#8fa8e0" stroke="#5f7ac0" stroke-width="0.8"/><rect x="9" y="9" width="6" height="6" fill="#c9dcf6" stroke="#5f86c8" stroke-width="0.8"/><path d="M15 15 L10.5 15 L15 10.5Z" fill="#111"/></g><g transform="translate(775.0 208.0)"><path d="M8 0.5 L11 4 H9.2 V6.8 H12 V5 L15.5 8 L12 11 V9.2 H9.2 V12 H11 L8 15.5 L5 12 H6.8 V9.2 H4 V11 L0.5 8 L4 5 V6.8 H6.8 V4 H5Z" fill="#f2f2f2" stroke="#888" stroke-width="0.4"/><circle cx="8" cy="8" r="1.6" fill="#888"/></g><g transform="translate(775.0 230.5)"><circle cx="8" cy="8.5" r="6" fill="none" stroke="#d8d8d0" stroke-width="1.7"/><path d="M6 0.8 L10 2.3 L6.5 4.8Z" fill="#e8e8e0"/><circle cx="8" cy="8.5" r="1.2" fill="#777"/></g><g transform="translate(775.0 252.5)"><rect x="1.5" y="1.5" width="13.5" height="13.5" fill="#8a90a0" stroke="#f4f4f4" stroke-width="1"/><rect x="1.5" y="6.5" width="8.5" height="8.5" fill="url(#gv)" stroke="#fff" stroke-width="0.8"/></g><g transform="translate(775.0 274.5)"><path d="M1.5 1.5 H9 L14.5 14.5 H1.5Z" fill="#f2f4f8" stroke="#fff" stroke-width="0.6"/><path d="M9 1.5 L14.5 14.5 H10.5 L8 5Z" fill="#a8c0e6"/><path d="M4.5 11 H12" stroke="#111" stroke-width="1.6"/><path d="M10.5 8.5 L13.5 11 L10.5 13.5Z" fill="#111"/></g><g transform="translate(775.0 296.0)"><path d="M1.5 9 H15" stroke="#e8e8e8" stroke-width="1.1"/><path d="M10.5 2 L5 15.5" stroke="#c9c9c9" stroke-width="1.1"/><path d="M8 0 V5" stroke="#888" stroke-width="0.7" stroke-dasharray="1 1"/></g><g transform="translate(775.0 317.5)"><path d="M1 9.5 H10" stroke="#e8e8e8" stroke-width="1.2"/><path d="M15 1.5 L11 13" stroke="#d0d0d0" stroke-width="1.2"/><path d="M11 13 L10 15.5" stroke="#6a76a8" stroke-width="1.2"/></g><g transform="translate(775.0 339.5)"><rect x="1" y="5.5" width="14" height="8.5" fill="url(#gv)" stroke="#fff" stroke-width="0.6"/><path d="M11.5 2 V8" stroke="#8a94c0" stroke-width="1.1"/><circle cx="11.5" cy="2.8" r="1.1" fill="#ccd"/></g><g transform="translate(775.0 361.5)"><rect x="1" y="5.5" width="14" height="8.5" fill="url(#gv)" stroke="#fff" stroke-width="0.6"/><path d="M4.5 3 V6 M11.5 3 V6" stroke="#ddd" stroke-width="1"/><path d="M5 5.5 H11" stroke="#595959" stroke-width="1.4"/></g><g transform="translate(775.0 383.5)"><path d="M1.5 8 H14.5" stroke="#b8c6f0" stroke-width="1.6"/><path d="M5 5.5 L8 8 L5 10.5 M11 5.5 L8 8 L11 10.5" fill="none" stroke="#6f86d0" stroke-width="1.3"/><ellipse cx="8" cy="8" rx="6.5" ry="3.4" fill="#5a78c8" opacity="0.35"/></g><g transform="translate(775.0 405.5)"><path d="M1.5 14.5 V7.5 L7.5 1.5 H14.5 V14.5Z" fill="url(#gv)" stroke="#fff" stroke-width="0.7"/><path d="M1 7 L7 1" stroke="#eee" stroke-width="1"/></g><g transform="translate(775.0 427.5)"><path d="M1.5 14.5 V9 C1.5 4.5 5 1.5 9 1.5 H14.5 V14.5Z" fill="url(#gv)" stroke="#fff" stroke-width="0.7"/><path d="M0.8 8 C1.2 3.8 4.2 1 8 0.6" fill="none" stroke="#333a55" stroke-width="1.2"/></g><g transform="translate(775.0 449.5)"><path d="M1.5 10 C4 4 7 13 10 7 S14 6 15 2" fill="none" stroke="#44588a" stroke-width="1.2" stroke-dasharray="2 1.2"/><rect x="1" y="7" width="3" height="3.5" fill="#33477a"/><rect x="11.5" y="6" width="3" height="3.5" fill="#33477a"/><path d="M1.5 14.5 L2.5 12 M15 1 V5" stroke="#eee" stroke-width="1"/><circle cx="13" cy="2.5" r="1" fill="#d8c060"/></g><g transform="translate(775.0 471.5)"><path d="M5.5 4.35 L8.35 1.5 H15.0 V8.15 L12.15 11.0 H5.5Z" fill="#b8c6dc" stroke="#1e2444" stroke-width="0.8"/><path d="M5.5 4.35 L8.35 1.5 H15.0 L12.15 4.35Z" fill="#fff"/><path d="M5.5 4.35 H12.15 V11.0 H5.5Z" fill="#f4f6fa" stroke="#8a96a8" stroke-width="1"/><path d="M1 8.35 L3.85 5.5 H10.5 V12.15 L7.65 15.0 H1Z" fill="#9ab0cc" stroke="#1e2444" stroke-width="0.8"/><path d="M1 8.35 L3.85 5.5 H10.5 L7.65 8.35Z" fill="#f8fafc"/><path d="M1 8.35 H7.65 V15.0 H1Z" fill="#dfe8f4" stroke="#7a8aa0" stroke-width="1"/></g><rect x="706" y="102.2" width="10" height="2.6" fill="#f0f0f0"/><rect x="726.9" y="99.4" width="6.4" height="6.6" fill="none" stroke="#f4f4f4" stroke-width="1.8"/><path d="M729 98 V96.8 H736 V103.8 H734.6" fill="none" stroke="#d8d8d8" stroke-width="1"/><path d="M746.6 97.8 L754.6 105.8 M754.6 97.8 L746.6 105.8" stroke="#f4f4f4" stroke-width="2.2"/><path d="M80 465 V418" stroke="#2f5a33" stroke-width="6.4" stroke-linecap="round"/><path d="M80 465 H127.5" stroke="#6a2f33" stroke-width="6.4" stroke-linecap="round"/><path d="M80 465 V418" stroke="#6ab46a" stroke-width="4.2" stroke-linecap="round"/><path d="M83 465.2 H127.5" stroke="#bd5e5e" stroke-width="4.2" stroke-linecap="round"/><path d="M80 463 V419" stroke="#8fd08a" stroke-width="1.4" stroke-linecap="round" opacity="0.7"/><text x="81.6" y="415" text-anchor="middle" font-family="Liberation Sans,sans-serif" font-size="19" fill="#3c733c" transform="translate(81.6 0) scale(1.12 1) translate(-81.6 0)">Y</text><text x="129.8" y="462" text-anchor="middle" font-family="Liberation Sans,sans-serif" font-size="16.5" fill="#8a383e" transform="translate(129.8 0) scale(1.15 1) translate(-129.8 0)">X</text><text x="86.8" y="458" text-anchor="middle" font-family="Liberation Sans,sans-serif" font-size="9.5" fill="#3f78c8">Z</text><circle cx="79.5" cy="465" r="2.2" fill="#9ab0e8"/></svg>
<div id="cmdgap"></div><div id="cmdgrip"></div>
<div id="cmdhist"><span>指定下一点或 [放弃(U)]: *取消*</span></div>
<div id="cmdin"><span>键入命令</span></div>
<div id="status"></div>
<svg width="800" height="601" viewBox="0 0 800 601"><path d="M3 522.5 H22" stroke="#8a8a8a" stroke-width="1" stroke-dasharray="1 1.5"/><path d="M3 524.5 H22" stroke="#8a8a8a" stroke-width="1" stroke-dasharray="1 1.5"/><path d="M3 526.5 H22" stroke="#8a8a8a" stroke-width="1" stroke-dasharray="1 1.5"/><path d="M3 528.5 H22" stroke="#8a8a8a" stroke-width="1" stroke-dasharray="1 1.5"/><path d="M8.5 537 L16.5 545 M16.5 537 L8.5 545" stroke="#f4f4f4" stroke-width="1.8"/><path d="M9.5 555.5 L18 565.5" stroke="#f4f4f4" stroke-width="3.2" stroke-linecap="round"/><circle cx="9" cy="555" r="3.6" fill="#f4f4f4"/><circle cx="7.5" cy="553" r="1.8" fill="#4a4a4a"/><rect x="31.5" y="551.5" width="13" height="14" fill="#e4e4e4" stroke="#888" stroke-width="1"/><path d="M34 555 L38 558.5 L34 562" fill="none" stroke="#333" stroke-width="1.4"/><path d="M38.5 562.5 H42.5" stroke="#333" stroke-width="1.2"/><path d="M47.5 558 H52.5 L50 561Z" fill="#888"/><rect x="301.5" y="571.5" width="499" height="26.5" fill="#4e4e4e" stroke="#6a6a6a" stroke-width="1"/><rect x="328" y="572" width="24" height="26" fill="#3c4658"/><rect x="432" y="572" width="46" height="26" fill="#3e4a66"/><rect x="548" y="572" width="24" height="26" fill="#2a4a8a"/><rect x="326.5" y="572" width="1" height="26" fill="#707070"/><rect x="327.5" y="572" width="1" height="26" fill="#3a3a3a"/><rect x="430.5" y="572" width="1" height="26" fill="#707070"/><rect x="431.5" y="572" width="1" height="26" fill="#3a3a3a"/><rect x="493" y="572" width="1" height="26" fill="#707070"/><rect x="494" y="572" width="1" height="26" fill="#3a3a3a"/><rect x="520" y="572" width="1" height="26" fill="#707070"/><rect x="521" y="572" width="1" height="26" fill="#3a3a3a"/><rect x="546.5" y="572" width="1" height="26" fill="#707070"/><rect x="547.5" y="572" width="1" height="26" fill="#3a3a3a"/><rect x="655" y="572" width="1" height="26" fill="#707070"/><rect x="656" y="572" width="1" height="26" fill="#3a3a3a"/><rect x="699" y="572" width="1" height="26" fill="#707070"/><rect x="700" y="572" width="1" height="26" fill="#3a3a3a"/><rect x="722.5" y="572" width="1" height="26" fill="#707070"/><rect x="723.5" y="572" width="1" height="26" fill="#3a3a3a"/><rect x="746" y="572" width="1" height="26" fill="#707070"/><rect x="747" y="572" width="1" height="26" fill="#3a3a3a"/><rect x="773" y="572" width="1" height="26" fill="#707070"/><rect x="774" y="572" width="1" height="26" fill="#3a3a3a"/><g transform="translate(0 -1)"><path d="M309.5 577.5 V586.5 M305 582 H314" stroke="#e8e8e8" stroke-width="1.2"/><rect x="312.5" y="587.5" width="9.5" height="3.6" fill="#dcdcdc"/><path d="M333 577 V591.5 H349" fill="none" stroke="#1f3f9a" stroke-width="3.4" opacity="0.7"/><path d="M333 577 V591.5 H349" fill="none" stroke="#4f8cf8" stroke-width="1.4"/><path d="M335 589 H339 V585.5" fill="none" stroke="#3f7fe8" stroke-width="1"/><circle cx="363" cy="585.5" r="6.3" fill="none" stroke="#e0e0e0" stroke-width="1.4"/><path d="M363 585.5 H372 M363 585.5 L367 580" stroke="#e0e0e0" stroke-width="1.3"/><path d="M379.8 584.5 h6.4 l-3.2 4Z" fill="#f0f0f0"/><path d="M395 577 L410 595" stroke="#cfcfcf" stroke-width="1.8"/><path d="M402.5 576 V597" stroke="#e0e0e0" stroke-width="1.2"/><path d="M417.8 584.5 h6.4 l-3.2 4Z" fill="#f0f0f0"/><path d="M434 592 L447 578.5" stroke="#2a50b0" stroke-width="3.2"/><path d="M433 592.3 H450" stroke="#4f88f0" stroke-width="1.5" fill="none"/><path d="M435 591.5 L447.5 578.5" stroke="#5a90f8" stroke-width="1.1"/><rect x="460" y="579" width="14" height="13.5" fill="#3a4a80" stroke="#3f7fe8" stroke-width="1.5"/><rect x="458.3" y="577" width="4.2" height="4.2" fill="#4fc84f" stroke="#111" stroke-width="0.8"/><path d="M482.3 584.5 h6.4 l-3.2 4Z" fill="#f0f0f0"/><path d="M497.5 580 H514.5" stroke="#f0f0f0" stroke-width="2.6"/><path d="M497.5 586 H514.5" stroke="#e8e8e8" stroke-width="1.6"/><path d="M497.5 591.3 H507" stroke="#f0f0f0" stroke-width="2.6"/><path d="M507 591.8 H514.5" stroke="#e0e0e0" stroke-width="0.9"/><path d="M526.5 579 V593.5 H540" fill="none" stroke="#e4e4e4" stroke-width="1.3"/><path d="M528 592 L534 584.5 L532.5 588 L538 580.5" fill="none" stroke="#e4e4e4" stroke-width="1.4"/><path d="M526.5 577.5 l-1.8 2.6 h3.6Z M541.5 593.5 l-2.6 -1.8 v3.6Z" fill="#e4e4e4"/><circle cx="559" cy="579.5" r="2.4" fill="#3f8cf8"/><path d="M559 581 L554 592.5 M559 581 L564 592.5 M553.5 585 L559 588 L564.5 583" fill="none" stroke="#3f8cf8" stroke-width="2.2" stroke-linecap="round"/><circle cx="584" cy="579.5" r="2.4" fill="#cfcfcf"/><path d="M584 581 L579 592.5 M584 581 L589 592.5 M578.5 585 L584 588 L589.5 583" fill="none" stroke="#cfcfcf" stroke-width="2.2" stroke-linecap="round"/><circle cx="607" cy="579.5" r="2.4" fill="#cfcfcf"/><path d="M607 581 L602 592.5 M607 581 L612 592.5 M601.5 585 L607 588 L612.5 583" fill="none" stroke="#cfcfcf" stroke-width="2.2" stroke-linecap="round"/><path d="M623 580 V592 M628 584 h1.5 v1.5 h-1.5Z M628 588.5 h1.5 v1.5 h-1.5Z M634 580 V592" stroke="#c4c4c4" stroke-width="1.4" fill="none"/><path d="M638.3 584.5 h6.4 l-3.2 4Z" fill="#f0f0f0"/><circle cx="668" cy="586" r="5" fill="none" stroke="#c8c8c8" stroke-width="2.4" stroke-dasharray="2.2 1.6"/><path d="M683.3 584.5 h6.4 l-3.2 4Z" fill="#f0f0f0"/><path d="M710.5 578 V595 M702 586.5 H719" stroke="#d8d8d8" stroke-width="1.5"/><rect x="728.5" y="581.5" width="10" height="11" fill="none" stroke="#d0d0d0" stroke-width="1.1"/><path d="M730.5 584.5 H736.5 M730.5 587 H736.5 M730.5 589.5 H736.5" stroke="#d0d0d0" stroke-width="0.9"/><path d="M759 587 L764 595 H754Z" fill="none" stroke="#d0d0d0" stroke-width="1.2"/><circle cx="765" cy="582" r="2.6" fill="none" stroke="#d0d0d0" stroke-width="1.1"/></g><circle cx="788.5" cy="586" r="9.8" fill="#1f6bd2"/><circle cx="788.5" cy="586" r="9.8" fill="none" stroke="#2a5cae" stroke-width="1"/><path d="M784.5 586 L787.5 589 L793 583" fill="none" stroke="#7fb8f8" stroke-width="1.6"/></svg>
<div id="wm"><span class="w1">头条</span> <span class="at">@</span>小黄花CAD</div>
<div id="edgeB"></div><div id="edgeL"></div><div id="edgeR"></div>
</div>
</body></html>
